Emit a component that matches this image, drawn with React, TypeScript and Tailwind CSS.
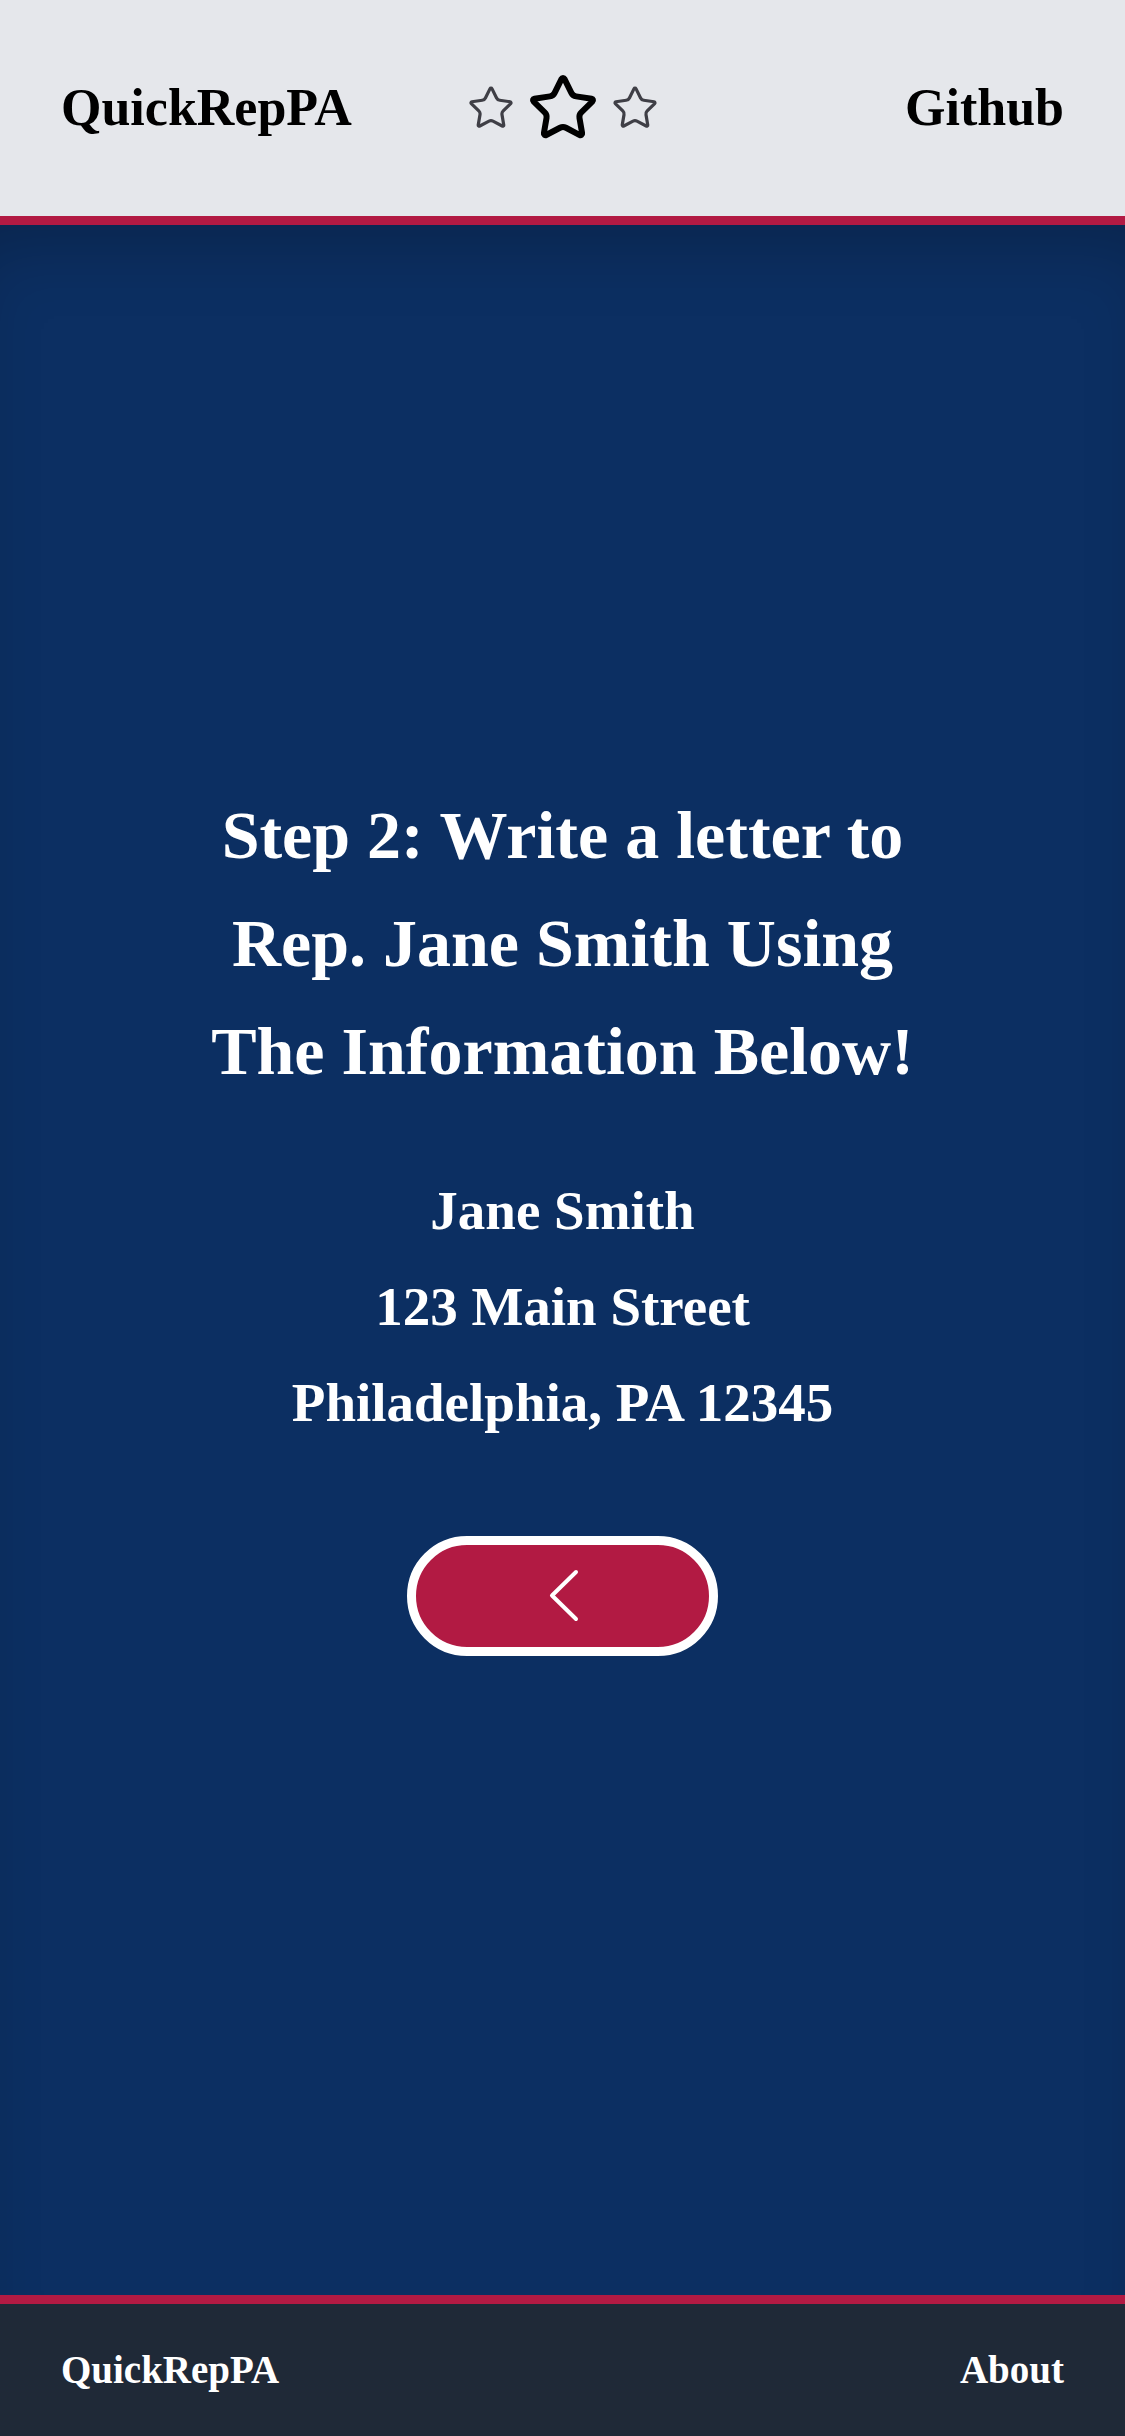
import { Star } from "lucide-react";

const serif = "font-['Liberation_Serif',_'Times_New_Roman',serif]";

const address = ["Jane Smith", "123 Main Street", "Philadelphia, PA 12345"];

export default function App() {
  return (
    <div className={`min-h-[2436px] flex flex-col ${serif}`}>
      {/* top nav */}
      <header className="h-[225px] bg-[#e5e7eb] border-b-[9px] border-[#b21a43] px-[61px] grid grid-cols-[1fr_auto_1fr] items-center">
        <a className="justify-self-start text-[52px] font-bold text-black">QuickRepPA</a>
        <div className="flex items-center gap-3">
          <Star size={48} strokeWidth={1.6} className="text-[#3f3f46]" />
          <Star size={72} strokeWidth={2} className="text-black" />
          <Star size={48} strokeWidth={1.6} className="text-[#3f3f46]" />
        </div>
        <a className="justify-self-end text-[52px] font-bold text-black">Github</a>
      </header>

      <main className="flex-1 bg-[#0c2f62] shadow-[inset_0_50px_70px_-30px_rgba(0,0,0,0.22)] flex flex-col items-center justify-center pb-[84px] text-white text-center">
        <h1 className="text-[68px] leading-[108px] font-bold max-w-[760px]">
          Step 2: Write a letter to Rep. Jane Smith Using The Information Below!
        </h1>
        <div className="mt-[58px] flex flex-col">
          {address.map((line) => (
            <p key={line} className="text-[55px] leading-[96px] font-bold">
              {line}
            </p>
          ))}
        </div>
        <button className="mt-[85px] w-[311px] h-[120px] rounded-full border-[9px] border-white bg-[#b21a43] flex items-center justify-center">
          <svg width="34" height="55" viewBox="0 0 34 55" fill="none">
            <path d="M30 4 L6 27.5 L30 51" stroke="white" strokeWidth="4" strokeLinecap="round" strokeLinejoin="round" />
          </svg>
        </button>
      </main>

      <footer className="h-[141px] bg-[#1f2937] border-t-[9px] border-[#b21a43] px-[61px] flex items-center justify-between text-white">
        <span className="text-[39px] font-bold">QuickRepPA</span>
        <a className="text-[39px] font-bold">About</a>
      </footer>
    </div>
  );
}
